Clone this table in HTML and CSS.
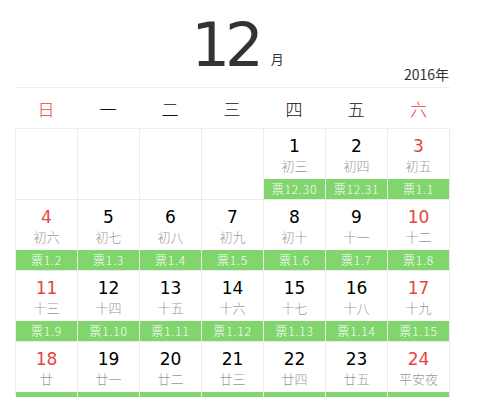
FILE: index.html
```html
<!DOCTYPE html>
<html lang="zh">
<head>
<meta charset="utf-8">
<link rel="stylesheet" href="styles.css">
</head>
<body>
<div class="cal">
  <div class="title">
    <span class="month">12</span><span class="yue">月</span>
    <span class="year">2016年</span>
  </div>
  <div class="week">
    <div class="wd red">日</div><div class="wd">一</div><div class="wd">二</div><div class="wd">三</div><div class="wd">四</div><div class="wd">五</div><div class="wd red">六</div>
  </div>
  <div class="grid">
    <div class="cell empty"></div><div class="cell empty"></div><div class="cell empty"></div><div class="cell empty"></div>
    <div class="cell"><div class="num">1</div><div class="lunar">初三</div><div class="tk">票12.30</div></div>
    <div class="cell"><div class="num">2</div><div class="lunar">初四</div><div class="tk">票12.31</div></div>
    <div class="cell last"><div class="num red">3</div><div class="lunar">初五</div><div class="tk">票1.1</div></div>

    <div class="cell"><div class="num red">4</div><div class="lunar">初六</div><div class="tk">票1.2</div></div>
    <div class="cell"><div class="num">5</div><div class="lunar">初七</div><div class="tk">票1.3</div></div>
    <div class="cell"><div class="num">6</div><div class="lunar">初八</div><div class="tk">票1.4</div></div>
    <div class="cell"><div class="num">7</div><div class="lunar">初九</div><div class="tk">票1.5</div></div>
    <div class="cell"><div class="num">8</div><div class="lunar">初十</div><div class="tk">票1.6</div></div>
    <div class="cell"><div class="num">9</div><div class="lunar">十一</div><div class="tk">票1.7</div></div>
    <div class="cell last"><div class="num red">10</div><div class="lunar">十二</div><div class="tk">票1.8</div></div>

    <div class="cell"><div class="num red">11</div><div class="lunar">十三</div><div class="tk">票1.9</div></div>
    <div class="cell"><div class="num">12</div><div class="lunar">十四</div><div class="tk">票1.10</div></div>
    <div class="cell"><div class="num">13</div><div class="lunar">十五</div><div class="tk">票1.11</div></div>
    <div class="cell"><div class="num">14</div><div class="lunar">十六</div><div class="tk">票1.12</div></div>
    <div class="cell"><div class="num">15</div><div class="lunar">十七</div><div class="tk">票1.13</div></div>
    <div class="cell"><div class="num">16</div><div class="lunar">十八</div><div class="tk">票1.14</div></div>
    <div class="cell last"><div class="num red">17</div><div class="lunar">十九</div><div class="tk">票1.15</div></div>

    <div class="cell"><div class="num red">18</div><div class="lunar">廿</div><div class="tk"></div></div>
    <div class="cell"><div class="num">19</div><div class="lunar">廿一</div><div class="tk"></div></div>
    <div class="cell"><div class="num">20</div><div class="lunar">廿二</div><div class="tk"></div></div>
    <div class="cell"><div class="num">21</div><div class="lunar">廿三</div><div class="tk"></div></div>
    <div class="cell"><div class="num">22</div><div class="lunar">廿四</div><div class="tk"></div></div>
    <div class="cell"><div class="num">23</div><div class="lunar">廿五</div><div class="tk"></div></div>
    <div class="cell last"><div class="num red">24</div><div class="lunar">平安夜</div><div class="tk"></div></div>
  </div>
</div>
</body>
</html>
```
FILE: styles.css
```css
html, body {
  margin: 0;
  padding: 0;
  background: #fff;
  overflow: hidden;
}
.cal {
  margin-left: 15px;
  width: 435px;
  font-family: "Noto Sans CJK SC", sans-serif;
}
.title {
  position: relative;
  height: 87px;
  border-bottom: 1px solid #eee;
  text-align: center;
}
.month {
  display: inline-block;
  font-family: "DejaVu Sans", sans-serif;
  font-size: 61px;
  line-height: 62px;
  color: #333;
  margin-top: 14px;
  margin-left: 10px;
  letter-spacing: -5px;
}
.yue {
  display: inline-block;
  font-size: 13px;
  color: #333;
  margin-left: 12px;
  vertical-align: 2px;
}
.year {
  position: absolute;
  right: 1px;
  bottom: 5px;
  font-family: "Noto Sans CJK SC", sans-serif;
  font-size: 14px;
  line-height: 16px;
  color: #333;
}
.week {
  display: grid;
  grid-template-columns: repeat(6, 62px) 63px;
  height: 40px;
  border-bottom: 1px solid #eee;
}
.wd {
  text-align: center;
  font-size: 17px;
  font-weight: 300;
  line-height: 42px;
  color: #111;
}
.red { color: #e5453e; }
.grid {
  display: grid;
  grid-template-columns: repeat(6, 62px) 63px;
  width: 435px;
}
.cell {
  height: 71px;
  box-sizing: border-box;
  border-left: 1px solid #ebebeb;
  border-bottom: 1px solid #ebebeb;
  text-align: center;
  display: flex;
  flex-direction: column;
}
.cell.last {
  border-right: 1px solid #ebebeb;
}
.num {
  font-family: "DejaVu Sans", sans-serif;
  font-size: 17px;
  line-height: 20px;
  padding-top: 7px;
  color: #000;
}
.num.red { color: #e5453e; }
.lunar {
  font-size: 13px;
  font-weight: 300;
  line-height: 19px;
  color: #999;
  height: 23px;
}
.tk {
  height: 20px;
  background: #80d56c;
  color: #fff;
  font-size: 12px;
  font-weight: 300;
  line-height: 20px;
  letter-spacing: 0.8px;
}
.cell.empty .tk { display: none; }
```
